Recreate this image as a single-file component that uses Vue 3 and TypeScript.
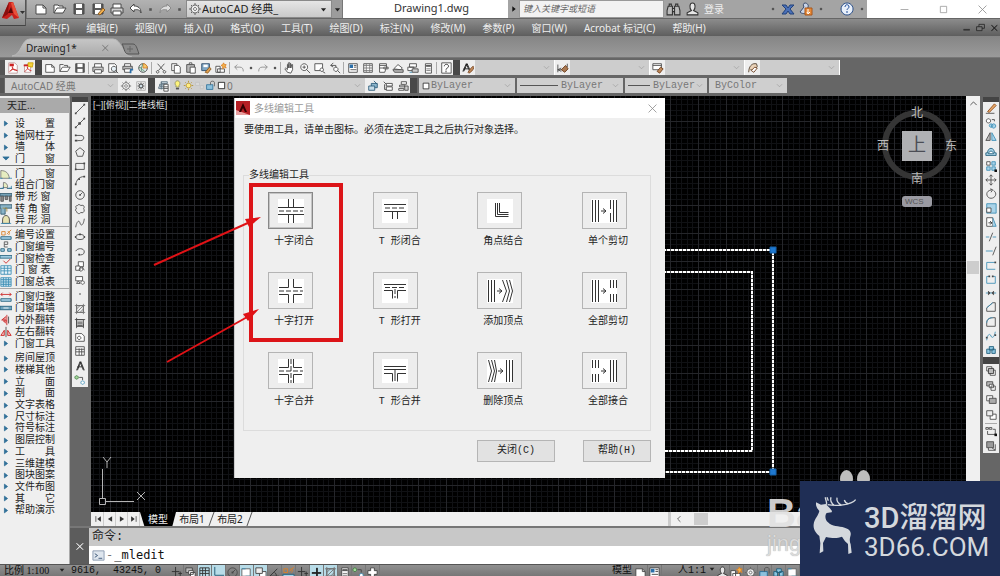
<script setup lang="ts">
import { h, ref } from 'vue'
import type { FunctionalComponent } from 'vue'

type Shape = [d: string, stroke?: string, fill?: string]

const K = '#484848'
const B = '#3d8fb5'
const L = '#a9d3e8'
const W = '#ffffff'
const O = '#d9822b'
const R = '#cc2222'
const N = 'none'

const saveShapes: Shape[] = [['M2 2h10v10H2z', K, '#5a5a5a'], ['M4 2h6v4H4z', N, W], ['M4 8h6v4H4z', N, W]]

const shapes: Record<string, Shape[]> = {
  new: [['M2 3h7l3 3v6H2z', K, W], ['M9 3v3h3']],
  open: [['M1 11V3h4l1 1h4v2', K, W], ['M1 11l3-5h9l-3 5z', K, W]],
  save: saveShapes,
  saveas: [...saveShapes, ['M7 12l5-6 2 2-5 5z', '#8a5a20', '#f0b050']],
  print: [['M3 6V2h8v4', K, W], ['M1 6h12v5H1z', K, '#cfcfcf'], ['M3 9h8v4H3z', K, W]],
  undo: [['M5 2L1 6l4 4V8c4-1 6 0 7 3c0-5-3-7-7-7z', K, W]],
  redo: [['M9 2l4 4-4 4V8C5 7 3 8 2 11c0-5 3-7 7-7z', '#8a8a8a', '#dddddd']],
  undoLight: [['M5 3L2 6l3 3M2 6h6c3 0 4 2 4 5', '#8a8a8a']],
  redoLight: [['M9 3l3 3-3 3M12 6H6c-3 0-4 2-4 5', '#8a8a8a']],
  dot: [['M5 5h4v4H5z', N, '#555555']],
  down: [['M3 5h8l-4 5z', N, '#222222']],
  right: [['M4 2l6 5-6 5z', N, '#111111']],
  chevron: [['M3 5l4 4 4-4', '#999999']],
  up: [['M3 9l4-4 4 4', '#333333']],
  gear: [['M7 1v2M7 11v2M1 7h2M11 7h2M3 3l1 1M10 10l1 1M11 3l-1 1M3 11l1-1', '#666666'], ['M7 3a4 4 0 1 0 .1 0z', '#666666', '#eeeeee'], ['M7 5.500a1.500 1.500 0 1 0 .1 0z', '#666666', W]],
  gearBox: [['M2 2h10v10H2z', '#aaaaaa'], ['M4 4l6 6M10 4l-6 6M7 3v8M3 7h8', K], ['M5 5h4v4H5z', K, '#cfdde5']],
  pdf: [['M2 1h7l3 3v9H2z', '#bb9999', W], ['M3 2h5v3H3z', N, R], ['M3 11c4-2 4-5 3-6M6 6c1 3 3 4 6 4M4 10c3-2 5-2 8 0', R]],
  pdfGo: [['M3 3h7v9H3z', '#bb9999', W], ['M3 11c4-2 4-5 3-6M6 6c1 3 3 4 5 4', R], ['M7 1l6 0-1 5-5-1z', '#c8a000', '#f3d23c'], ['M2 3h5v2H2z', N, R]],
  preview: [['M2 2h7l2 2v8H2z', K, W], ['M8 5a3 3 0 1 0 .1 0z', K, '#e8f2f8'], ['M10 10l3 3', K]],
  publish: [['M3 5V2h7v3', K, W], ['M1 5h11v4H1z', K, '#bbbbbb'], ['M3 8h7v4H3z', K, W], ['M10 8h3v2h-2v3h-2v-3z', N, '#2a6ea8']],
  globe: [['M7 2a5 5 0 1 0 .1 0z', K, '#dfe8ec'], ['M7 2v5h5c0-3-2-5-5-5z', O, '#f3c96a'], ['M2 7c3-2 5 3 7 4M6 2c2 2-3 4 0 9', '#4c8a5c']],
  cut: [['M3 2l7 8M11 2l-7 8', K], ['M3 10a1.500 1.500 0 1 0 .1 0zM11 10a1.500 1.500 0 1 0 .1 0z', K]],
  copy: [['M2 2h6v8H2z', K, W], ['M5 4h5l2 2v7H5z', K, W]],
  paste: [['M2 3h9v9H2z', K, '#b8b8b8'], ['M5 1h3v2H5z', K, W], ['M6 6h6v7H6z', K, W]],
  match: [['M2 2h9v8H2z', '#2f4b6b', '#7ea6c4'], ['M4 3h5v3H4z', N, W], ['M6 12l5-6 2 2-4 5z', '#8a5a20', '#e0a050']],
  star: [['M1 5h5v7H1zM3 8h8v4H3z', K, W], ['M10 1l1 2 2 0-1 2 1 2-2-1-2 2 0-3-2-1 2-1z', O, '#f3b34a']],
  hand: [['M4 12L1 8l1-1 2 2V3h1v4V1h2v6V2h1v5l1-4h1v6l-2 4z', K, W]],
  zoom: [['M6 2a4 4 0 1 0 .1 0z', K, W], ['M9 9l4 4M4 6h4M6 4v4', K]],
  zoomWin: [['M1 2h9v8H1z', K, W], ['M9 7a2 2 0 1 0 .1 0zM10 11l3 2', K, W]],
  zoomPrev: [['M5 1L2 4l3 2M2 4h6v2', K], ['M8 6a2.500 2.500 0 1 0 .1 0zM10 10l3 3', K, W]],
  props: [['M2 2h10v10H2z', K, W], ['M3 3h4v4H3z', N, '#2a6ea8'], ['M8 4h3M8 6h3M4 9h7', K]],
  center: [['M2 2h10v10H2z', K, W], ['M2 4h10M2 7h10M2 10h10M5 2v10M9 2v10', '#777777']],
  palette: [['M3 2h8v4l-2 6H3z', K, W], ['M3 4h8M3 7h5M8 6h5v2H8z', K]],
  sheet: [['M2 8l5-5 5 4-2 2z', K, W], ['M1 9h12v3H3z', K, '#bbbbbb']],
  markup: [['M3 2h8v4H3zM1 6h7v4H1z', K, W], ['M6 8h7v4H6z', K, '#cccccc'], ['M3 12h3', B]],
  calc: [['M4 2h7v11H4z', K, W], ['M5 4h5v1H5z', K, '#888888'], ['M5 8h5M5 10h5', '#777777']],
  help: [['M2 1h11v12H2z', K, W], ['M5 5c0-3 5-3 5 0c0 2-3 2-3 4M7 10v2', '#222222']],
  textStyle: [['M1 11L5 2l4 9M2 8h5', '#111111'], ['M2 11L6 2l4 9', '#111111'], ['M7 12c2-3 4-6 6-7l1 1c-1 4-4 6-6 7z', '#7b4b2a', '#c08a5a']],
  dimStyle: [['M1 3v9M1 9l4-2M1 9l4 2M1 9h10M12 2v4', K], ['M5 9l5-5 3 4-4 4z', '#6b3b1a', '#a87850']],
  tableStyle: [['M1 2h10v7H1zM1 4h10', K, W], ['M6 11l4-5 3 2-4 5z', '#6b3b1a', '#c08a5a']],
  leaderStyle: [['M2 12c0-5 2-9 6-10h3l1 3-4 5-4-1', '#4b3b2a', '#ead2b8'], ['M5 10l4-4 3 1-4 5z', '#6b3b1a', W]],
  layers: [['M5 2h7v2H5zM3 5h6v2H3zM2 8h6v2H2zM5 11V2', '#5a7080', '#d6e2ea'], ['M8 5h5v8H8zM8 8h5M8 10h5', K, W]],
  bulb: [['M7 1c-3 0-4 4-2 6v2h4V7c2-2 1-6-2-6z', '#8a8a60', '#fdf37a'], ['M5 10h4v2H5z', N, '#555555']],
  sun: [['M7 4a3 3 0 1 0 .1 0z', '#b08a20', '#ffec80'], ['M7 1v2M7 11v2M1 7h2M11 7h2M3 3l1 1M10 10l1 1M11 3l-1 1M3 11l1-1', '#b08a20']],
  freeze: [['M2 3h5v4H2zM8 7h4v4H8z', '#c2c2c2', '#d8d8d8']],
  lock: [['M2 6h8v6H2z', '#2a6e98', '#8cc0dc'], ['M7 6V3c0-2 5-2 5 0v5', '#555555']],
  square: [['M3 3h8v8H3z', '#111111', W]],
  layer1: [['M5 4h7v5H5z', '#2a5a78', '#8cb6cc'], ['M2 7h7v5H2zM8 1l4 4', '#2a5a78', '#c6dce8']],
  layer2: [['M2 2l3 3M5 4h7v3H5zM5 8h7v4H5z', K, W], ['M3 5v6h2', K]],
  layer3: [['M5 2h6v3H5zM3 6h6v2H3zM2 10h6v2H2z', K, W], ['M9 7h4v5H9z', K, '#cccccc']],
  binoculars: [['M2 4h4v8H1V8zM8 4h4l1 4v4H8zM6 6h2v3H6zM3 2h2v2H3zM9 2h2v2H9z', '#333333', '#bbbbbb']],
  user: [['M7 1c-3 0-3 5-1 7l-4 2v2h10v-2l-4-2c2-2 2-7-1-7z', '#333333', '#e6e6e6']],
  exchange: [['M1 3h4l2 3 2-3h4l-4 4 4 5H9L7 9l-2 3H1l4-5z', '#23427a', '#4a70b8']],
  community: [['M6 1c-2 0-2 3-1 4l-4 5c2 2 5 2 7 0l1-5C10 3 8 1 6 1z', '#3a4a6a', '#c8d4e8'], ['M6 6h7v7H6z', '#a8561a', '#e88a38'], ['M9 7v4M8 10l1 2 2-2', W]],
  helpBlue: [['M7 1a6 6 0 1 0 .1 0z', '#2a4f8a', '#e9f0fa'], ['M5 5c0-3 4-3 4 0c0 1-2 2-2 3M7 9v2', '#1c4a98']],
  min: [['M2 7h10', '#999999']],
  max: [['M3 3h8v8H3z', '#999999']],
  close: [['M2 2l10 10M12 2L2 12', '#8a8a8a']],
  tabClose: [['M2 2l10 10M12 2L2 12', '#777777'], ['M3 2l10 10M13 2L3 12', '#777777']],
  minDark: [['M2 10h9', '#222222'], ['M2 9h9', '#222222']],
  restore: [['M5 3h7v5H5z', '#222222'], ['M2 6h7v5H2z', '#222222', '#777777']],
  closeDark: [['M3 3l8 8M11 3l-8 8', '#222222'], ['M4 3l8 8M12 3l-8 8', '#222222']],
  closeWhite: [['M2 2l10 10M12 2L2 12', '#ffffff'], ['M3 2l10 10M13 2L3 12', '#ffffff']],
  // drawing tools
  line: [['M2 12L12 2', K], ['M1 11h2v2H1zM11 1h2v2h-2z', N, K]],
  xline: [['M2 12L12 2', K], ['M1 11h2v2H1zM11 1h2v2h-2zM5 6h3v3H5z', N, K]],
  pline: [['M2 4h6c5 0 4 6 0 6H4', K], ['M1 9h3v2H1zM1 3h2v2H1z', N, K]],
  polygon: [['M7 2l5 4-2 6H4L2 6z', K]],
  rect: [['M2 4h10v7H2z', K], ['M1 10h2v2H1zM11 3h2v2h-2z', N, K]],
  arc: [['M2 12c1-5 4-9 10-9', K], ['M1 11h2v2H1zM11 2h2v2h-2zM5 5h2v2H5z', N, K]],
  circle: [['M7 2a5 5 0 1 0 .1 0zM7 7l3-3', K], ['M6 6h2v2H6z', N, K]],
  cloud: [['M4 3c1-2 3-1 4 0c2-1 4 0 4 2c-1 1-1 2 0 3c0 3-2 4-4 3c-1 2-4 2-5-1c-2-1-1-3 0-4C1 5 2 3 4 3z', K]],
  spline: [['M2 12c1-7 4-9 5-5s4 3 5-5', K]],
  ellipse: [['M7 4c-7 0-7 6 0 6s7-6 0-6z', K], ['M1 6h2v2H1zM6 3h2v2H6zM11 6h2v2h-2z', N, K]],
  earc: [['M2 6c2-4 10-4 10 1c0 3-4 4-6 3', K], ['M5 9h2v2H5z', N, K]],
  insert: [['M5 2h6v6H5z', K, W], ['M2 7h5v5H2zM9 7l3 5M8 9a2 2 0 1 0 .1 0z', K, W]],
  block: [['M2 3h8v5H2z', K, W], ['M5 8l-2 3h4zM10 8a2 2 0 1 0 .1 0z', K, W]],
  point: [['M6 6h2v2H6z', N, '#777777']],
  hatch: [['M3 3h8v8H3z', K], ['M1 3h12M1 11h12M3 1v12M11 1v12M3 7l4-4M3 11l8-8M7 11l4-4', '#777777']],
  gradient: [['M3 3h8v8H3zM1 3h12M3 1v12', K, '#dddddd'], ['M4 6h6M4 8h6M4 10h6M11 8v5', K]],
  region: [['M2 3h7l3 3v6H2z', K, W], ['M6 6a2 2 0 1 0 .1 0z', K]],
  table: [['M2 2h10v10H2zM2 5h10M2 8h10M6 4v8M9 4v8', K, W]],
  text: [['M3 12L7 2l4 10M4 8h6', '#222222'], ['M4 12L8 2l4 10', '#222222']],
  addsel: [['M3 2a2 2 0 1 0 .1 0z', '#3d7a3d', '#a8d8a0'], ['M10 8a2 2 0 1 0 .1 0z', B, W], ['M6 4h4v3', K]],
  // modify tools
  erase: [['M3 10l8-9 2 2-8 8z', '#8a4a1a', '#e8a868'], ['M1 12h10', K]],
  copyObj: [['M4 2a2.500 2.500 0 1 0 .1 0z', K, W], ['M10 8a2.500 2.500 0 1 0 .1 0zM7 8a2 2 0 1 0 .1 0z', B, L], ['M8 3h3v2', K]],
  mirror: [['M6 2v9H1z', K, '#bbbbbb'], ['M8 2v9h5z', B, L]],
  offset: [['M1 11h12V8h-2c0-7-8-7-8 0H1z', '#22607c', L], ['M4 9h6c-1-4-5-4-6 0z', '#22607c', W]],
  array: [['M2 2h4v4H2z', K, W], ['M8 2h4v4H8zM2 8h4v4H2zM8 8h4v4H8z', B, L], ['M11 11h3v3h-3z', N, '#111111']],
  move: [['M7 1v12M1 7h12M5 3l2-2 2 2M5 11l2 2 2-2M3 5L1 7l2 2M11 5l2 2-2 2', K]],
  rotate: [['M10 3c5 3 2 9-3 9S0 5 5 3l3-1M6 1l3 1-2 3', K]],
  scale: [['M2 2h11v11H2z', B, L], ['M2 7h5v5H2z', K, W]],
  stretch: [['M2 2h7v10H2z', K, W], ['M9 2l4 10H9', B, L], ['M4 8h4M6 6l2 2-2 2', '#222222']],
  trim: [['M1 7h4M9 7h4', B], ['M9 2L5 12', K]],
  extend: [['M1 7h8', B], ['M13 2L9 12', K]],
  breakPt: [['M12 4H2v8h10', B], ['M11 3h2v2h-2z', N, K]],
  brk: [['M5 4H2v8h10V4H9', B], ['M4 3h2v2H4zM8 3h2v2H8z', N, K]],
  join: [['M1 7h12', B], ['M4 5l2 2-2 2zM10 5L8 7l2 2z', K, K]],
  chamfer: [['M2 12h10V2H9L2 8z', K], ['M2 8l7-6', B]],
  fillet: [['M2 12h10V2H9C4 2 2 5 2 8z', K], ['M2 8c0-3 2-6 7-6', B]],
  blend: [['M2 12c1-8 4-8 5-5s4 2 5-5', B], ['M1 8h2v2H1zM11 5h2v2h-2z', N, K]],
  explode: [['M2 6h4v5H2zM5 3h5v4H5zM8 6h4v5H8z', '#22607c', '#8cc6e0']],
  ord1: [['M2 2h6v5H2z', K, W], ['M6 6h6v6H6z', K, W], ['M4 4h6v6H4z', '#333333', '#bbbbbb']],
  ord2: [['M2 2h7v5H2z', K, '#bbbbbb'], ['M5 5h5v4H5zM7 7h5v5H7z', K, W]],
  ord3: [['M2 2h7v6H2z', K, W], ['M5 5h8v6H5z', K, '#aaaaaa']],
  ord4: [['M6 6h7v6H6z', K, W], ['M2 2h7v6H2z', K, '#eeeeee']],
  ord5: [['M1 3h3v2H1zM5 3h3v2H5zM9 5h3v6H3V7', K], ['M11 10h3v3h-3z', N, '#111111']],
  ord6: [['M2 2h8v7H2z', K, '#9a9a9a'], ['M4 9v3h8V5M8 9l4 3', K]],
  // door and window commands
  tri: [['M5 4l4 3-4 3z', '#2f6f98', '#2f6f98']],
  triDown: [['M3 5h8l-4 4z', '#2f6f98', '#2f6f98']],
  dArc: [['M1 12V3c6 0 9 3 10 9z', '#777777', '#e6ecc0'], ['M0 12h3M10 12h4', B]],
  dCombo: [['M4 10V4c3 0 5 2 5 6z', '#777777', '#e6ecc0'], ['M0 11h4v-2M8 11h6V8', '#22607c', L]],
  dStrip: [['M0 3h14v3H0z', '#30586c', '#7aa7bc'], ['M1 6h3v6H1zM6 6h3v4H6zM11 6h2v6h-2z', '#555555', '#8a8a8a']],
  dCorner: [['M0 2h14v4H6v7H1V6H0z', '#30586c', '#8ab4c8'], ['M3 6h5v4', '#a08a40']],
  dArch: [['M3 11V7c0-7 8-7 8 0v4z', '#444444', '#e9e4b0'], ['M1 11h12', B]],
  dNum1: [['M2 3h4v4H2zM8 6l5-5M9 3c2 0 3 2 1 4', O], ['M1 9h12v3H1z', '#22607c', L]],
  dNum2: [['M5 1h4v3H5v3h4M5 1v3', '#555555'], ['M1 9h4v3H1zM9 9h4v3H9z', '#22607c', L]],
  dCheck: [['M0 3h14v3H0z', '#22607c', L], ['M4 9l3 3 5-5', R]],
  dTable: [['M1 2h12v10H1zM1 5h12M1 8h12M5 2v10M9 2v10', B, '#e6f3fa']],
  dTable2: [['M1 2h12v10H1zM1 4h12M1 6h12M1 8h12M1 10h12M4 2v10M7 2v10M10 2v10', B, '#e6f3fa']],
  dArrange: [['M1 4h12M3 2L1 4l2 2M11 2l2 2-2 2', R], ['M1 9h12v3H1z', '#22607c', L]],
  dFill: [['M0 5h14v4H0z', '#22607c', '#6fa3bd'], ['M4 7h6', W]],
  dFlipV: [['M8 1v12M7 3L2 7h5M7 11L4 8h4', R, '#e9a0a0'], ['M10 3v8', '#444444']],
  dFlipH: [['M5 5v6H1zM9 5v6h4z', R, '#f0c0c0'], ['M7 1v12', '#444444']],
  // status bar toggles
  sGrid: [['M2 2h10v10H2zM2 5h10M2 8h10M5 2v10M8 2v10', '#333333']],
  sOrtho: [['M3 1v9h10', '#1f5a74']],
  sPlus: [['M7 2v10M2 7h10', '#222222'], ['M8 2v10M2 8h10', '#222222']],
  sSnap: [['M6 1v10M2 6h8M9 8h4M11 6v5', '#333333']],
  sCross: [['M5 2h4v3h3v4H9v3H5V9H2V5h3z', '#444444', W]],
  sAngle: [['M2 11h10M2 11l8-8M7 7c2 1 2 3 2 4', '#333333']],
  sDraw: [['M2 3h9v8H2z', '#666666', W], ['M2 3h4M6 11h6', B]],
  prompt: [['M1 2h12v10H1z', '#8a9ab0', '#dfe6ee'], ['M3 5l3 2-3 2M7 10h4', '#3c5878']],
  first: [['M4 3v8', '#333333'], ['M11 3v8L6 7z', N, '#333333']],
  prev: [['M10 3v8L4 7z', N, '#333333']],
  next: [['M4 3v8l6-4z', N, '#333333']],
  last: [['M10 3v8', '#333333'], ['M3 3v8l5-4z', N, '#333333']],
  left: [['M9 3L5 7l4 4', '#333333']],
}

const Icon: FunctionalComponent<{ name: string; size?: number }> = (props) =>
  h(
    'svg',
    { viewBox: '0 0 14 14', width: props.size ?? 12, height: props.size ?? 12, 'aria-hidden': 'true' },
    (shapes[props.name] ?? []).map(([d, stroke, fill]) => h('path', { d, stroke: stroke ?? K, fill: fill ?? N })),
  )
Icon.props = ['name', 'size']

const quickTools = ['new', 'open', 'save', 'saveas', 'print', 'undo', 'dot', 'redo', 'dot']
const menus = ['文件(F)', '编辑(E)', '视图(V)', '插入(I)', '格式(O)', '工具(T)', '绘图(D)', '标注(N)', '修改(M)', '参数(P)', '窗口(W)', 'Acrobat 标记(C)', '帮助(H)']

const standardTools = ['new', 'open', 'save', '|', 'print', 'preview', 'publish', 'globe', '|', 'cut', 'copy', 'paste', 'match', 'star', '|', 'undoLight', 'dot', 'redoLight', 'dot', '|', 'hand', 'zoom', 'zoomWin', 'zoomPrev', '|', 'props', 'center', 'palette', 'sheet', 'markup', 'calc', '|', 'help']
const styleTools = ['textStyle', 'dimStyle', 'tableStyle', 'leaderStyle']
const layerFlags = ['bulb', 'sun', 'freeze', 'lock', 'square']
const drawTools = ['line', 'xline', 'pline', 'polygon', 'rect', 'arc', 'circle', 'cloud', 'spline', 'ellipse', 'earc', 'insert', 'block', 'point', 'hatch', 'gradient', 'region', 'table', 'text', 'addsel']
const modifyTools = ['erase', 'copyObj', 'mirror', 'offset', 'array', 'move', 'rotate', 'scale', 'stretch', 'trim', 'extend', 'breakPt', 'brk', 'join', 'chamfer', 'fillet', 'blend', 'explode']
const orderTools = ['ord1', 'ord2', 'ord3', 'ord4', '|', 'ord5', 'ord6']

const commands: { icon: string; text: string }[][] = [
  [
    { icon: 'tri', text: '设　　置' },
    { icon: 'tri', text: '轴网柱子' },
    { icon: 'tri', text: '墙　　体' },
    { icon: 'triDown', text: '门　　窗' },
  ],
  [
    { icon: 'dArc', text: '门　　窗' },
    { icon: 'dCombo', text: '组合门窗' },
    { icon: 'dStrip', text: '带 形 窗' },
    { icon: 'dCorner', text: '转 角 窗' },
    { icon: 'dArch', text: '异 形 洞' },
  ],
  [
    { icon: 'dNum1', text: '编号设置' },
    { icon: 'dNum2', text: '门窗编号' },
    { icon: 'dCheck', text: '门窗检查' },
    { icon: 'dTable', text: '门 窗 表' },
    { icon: 'dTable2', text: '门窗总表' },
  ],
  [
    { icon: 'dArrange', text: '门窗归整' },
    { icon: 'dFill', text: '门窗填墙' },
    { icon: 'dFlipV', text: '内外翻转' },
    { icon: 'dFlipH', text: '左右翻转' },
    { icon: 'tri', text: '门窗工具' },
  ],
  ['房间屋顶', '楼梯其他', '立　　面', '剖　　面', '文字表格', '尺寸标注', '符号标注', '图层控制', '工　　具', '三维建模', '图块图案', '文件布图', '其　　它', '帮助演示'].map((text) => ({ icon: 'tri', text })),
]

const three = 'M1.500 1v22M4.500 1v22M7.500 1v22'
const threeRight = 'M19.500 1v22M22.500 1v22M25.500 1v22'
const arrow = 'M10 12h5M12 9.500l3 2.500-3 2.500'
const mlineTools = [
  { text: '十字闭合', d: 'M10.500 0v8M15.500 0v8M10.500 16v8M15.500 16v8M0 8.500h26M0 15.500h26', dash: 'M1 12h24' },
  { text: 'T 形闭合', d: 'M2 5.500h22M2 12.500h22M10.500 12v8M15.500 12v8', dash: 'M3 9h20' },
  { text: '角点结合', d: 'M8.500 4v13.500h13M10.500 4v11.500h11M12.500 4v9.500h9', dash: '' },
  { text: '单个剪切', d: `${three}M19.500 1v9M19.500 14v9M22.500 1v22M25.500 1v22${arrow}`, dash: '' },
  { text: '十字打开', d: 'M10.500 0v8.500H1M15.500 0v8.500H24M10.500 24v-8.500H1M15.500 24v-8.500H24', dash: 'M1 12h24' },
  { text: 'T 形打开', d: 'M2 5.500h22M2 11.500h8.500v8M24 11.500h-8.500v8', dash: 'M3 8.500h20M13 10v9' },
  { text: '添加顶点', d: `${three}M15.500 1l4 11-4 11M19.500 1l3 11-3 11M22.500 1l3 11-3 11${arrow}`, dash: '' },
  { text: '全部剪切', d: `${three}M19.500 1v8M22.500 1v8M25.500 1v8M19.500 15v8M22.500 15v8M25.500 15v8${arrow}`, dash: '' },
  { text: '十字合并', d: 'M10.500 0v8.500H1M15.500 0v8.500H24M10.500 24v-8.500H1M15.500 24v-8.500H24', dash: 'M1 12h24M13 0v24' },
  { text: 'T 形合并', d: 'M2 7.500h22M2 14.500h8.500v8M24 14.500h-8.500v8M2 10.500h22M13 10v12', dash: '' },
  { text: '删除顶点', d: `M1.500 1l3 11-3 11M4.500 1l3 11-3 11M7.500 1l2 11-2 11${threeRight}M11 12h5M13 9.500l3 2.500-3 2.500`, dash: '' },
  { text: '全部接合', d: `M1.500 1v8M4.500 1v8M7.500 1v8M1.500 15v8M4.500 15v8M7.500 15v8${threeRight}${arrow}`, dash: '' },
]

const statusTools: { icon: string; on?: boolean }[] = [
  { icon: 'sSnap' }, { icon: 'ord2' }, { icon: 'sGrid', on: true }, { icon: 'sOrtho', on: true }, { icon: 'circle' },
  { icon: 'sDraw', on: true }, { icon: 'ord4', on: true }, { icon: 'sAngle' }, { icon: 'dNum1' }, { icon: 'sSnap' },
  { icon: 'sPlus', on: true }, { icon: 'hatch', on: true }, { icon: 'calc' }, { icon: 'addsel' }, { icon: 'sCross' },
]
const command = ref('_mledit')
const search = ref('')
</script>

<template>
  <div class="app">
    <header class="head">
      <button class="logo" aria-label="应用程序菜单">
        <svg viewBox="0 0 26 26" width="26" height="26">
          <path d="M2 18L9 2h4l6 16-5 1-2-4-5 4z" fill="#c8201c" />
          <path d="M9 2l-1 12-6 4z" fill="#8a0f0f" /><path d="M11 3l3 11 5 4-6-16z" fill="#e8503a" />
          <path d="M8 13l3-6 2 6z" fill="#5a0808" /><path d="M20 11h5l-2.500 3z" fill="#333" />
        </svg>
      </button>
      <div class="titlebar">
        <div class="quick">
          <button v-for="(t, i) in quickTools" :key="i" :class="{ narrow: t === 'dot' }" :aria-label="t"><Icon :name="t" :size="t === 'dot' ? 9 : 14" /></button>
        </div>
        <div class="workspace">
          <Icon name="gear" :size="14" />
          <select aria-label="工作空间"><option>AutoCAD 经典_</option></select>
          <Icon name="down" :size="9" />
        </div>
        <button class="more" aria-label="自定义"><Icon name="down" :size="9" /></button>
        <div class="doc">Drawing1.dwg</div>
        <button class="arrow" aria-label="展开"><Icon name="right" :size="8" /></button>
        <input v-model="search" class="search" type="text" placeholder="键入关键字或短语" aria-label="搜索" />
        <div class="account">
          <button aria-label="查找"><Icon name="binoculars" :size="15" /></button>
          <button class="login"><Icon name="user" :size="15" />登录</button>
          <span class="space"></span>
          <Icon name="dot" :size="8" />
          <button aria-label="Exchange"><Icon name="exchange" :size="14" /></button>
          <button aria-label="社区"><Icon name="community" :size="14" /></button>
          <Icon name="dot" :size="8" />
          <button class="qmark" aria-label="帮助"><Icon name="helpBlue" :size="14" /></button>
          <Icon name="dot" :size="8" />
        </div>
        <div class="winbtns">
          <button aria-label="最小化"><Icon name="min" :size="11" /></button>
          <button aria-label="最大化"><Icon name="max" :size="11" /></button>
          <button aria-label="关闭"><Icon name="close" :size="11" /></button>
        </div>
      </div>
      <nav class="menus">
        <button v-for="m in menus" :key="m">{{ m }}</button>
        <span class="space"></span>
        <Icon name="minDark" :size="10" /><Icon name="restore" :size="11" /><Icon name="closeDark" :size="10" />
      </nav>
    </header>

    <div class="tabs">
      <svg class="tabshape" viewBox="0 0 128 19" width="128" height="19">
        <defs><linearGradient id="tabFill" x2="0" y2="1"><stop offset="0" stop-color="#c6c6c6" /><stop offset="1" stop-color="#a9a9a9" /></linearGradient></defs>
        <path d="M0 18C10 17 9 1 18 1h83c9 0 9 17 19 18z" fill="url(#tabFill)" stroke="#b9b9b9" />
      </svg>
      <button class="tab">Drawing1*<Icon name="tabClose" :size="8" /></button>
      <button class="addtab" aria-label="新建">
        <svg viewBox="0 0 20 12" width="20" height="12"><path d="M1 1h11c3 0 4 4 6 10H7C3 11 3 3 1 1z" fill="#8a8a8a" stroke="#555" /><path d="M9 3v6M6 6h6" stroke="#666" /></svg>
      </button>
    </div>

    <div class="bars">
      <div class="bar">
        <span class="edge"></span>
        <div class="group"><button aria-label="PDF"><Icon name="pdf" /></button><button aria-label="PDF 选项"><Icon name="pdfGo" /></button></div>
        <span class="grip"></span>
        <div class="group">
          <template v-for="(t, i) in standardTools" :key="i">
            <i v-if="t === '|'"></i>
            <button v-else :class="{ narrow: t === 'dot' }" :aria-label="t"><Icon :name="t" :size="t === 'dot' ? 8 : 12" /></button>
          </template>
        </div>
        <span class="grip"></span>
        <div v-for="s in styleTools" :key="s" class="group style">
          <button :aria-label="s"><Icon :name="s" /></button>
          <select :aria-label="s" disabled><option></option></select>
          <Icon name="chevron" :size="9" />
        </div>
      </div>
      <div class="bar">
        <span class="edge thin"></span>
        <div class="combo space-combo"><select aria-label="工作空间" disabled><option>AutoCAD 经典</option></select><Icon name="chevron" :size="9" /></div>
        <div class="group"><button aria-label="设置"><Icon name="gear" /></button><button aria-label="我的工作空间"><Icon name="gearBox" /></button></div>
        <span class="grip"></span>
        <div class="group"><button aria-label="图层特性"><Icon name="layers" /></button></div>
        <div class="combo layer-combo">
          <Icon v-for="f in layerFlags" :key="f" :name="f" :size="11" />
          <select aria-label="图层" disabled><option>0</option></select><Icon name="chevron" :size="9" />
        </div>
        <div class="group"><button aria-label="置为当前"><Icon name="layer1" /></button><button aria-label="上一个图层"><Icon name="layer2" /></button><button aria-label="图层状态"><Icon name="layer3" /></button></div>
        <span class="grip"></span>
        <div class="combo mono color-combo"><Icon name="square" :size="10" /><select aria-label="颜色" disabled><option>ByLayer</option></select><Icon name="chevron" :size="9" /></div>
        <div class="combo mono type-combo"><span class="stroke"></span><select aria-label="线型" disabled><option>ByLayer</option></select><Icon name="chevron" :size="9" /></div>
        <div class="combo mono weight-combo"><span class="stroke"></span><select aria-label="线宽" disabled><option>ByLayer</option></select><Icon name="chevron" :size="9" /></div>
        <div class="combo mono plot-combo"><select aria-label="打印样式" disabled><option>ByColor</option></select><Icon name="chevron" :size="9" /></div>
      </div>
    </div>

    <main class="work">
      <aside class="panel">
        <h2>天正...</h2>
        <div class="cmds">
          <template v-for="(g, gi) in commands" :key="gi">
            <hr v-if="gi" :class="{ strong: gi === 1, blank: gi === 4 }" />
            <button v-for="(c, ci) in g" :key="ci"><Icon :name="c.icon" :size="c.icon.startsWith('tri') ? 11 : 12" />{{ c.text }}</button>
          </template>
        </div>
      </aside>

      <div class="center">
        <div class="upper">
          <div class="vtools">
            <div class="vbar draw"><button v-for="t in drawTools" :key="t" :aria-label="t"><Icon :name="t" /></button></div>
          </div>
          <div class="view">
            <div class="canvas">
              <svg class="scene" width="100%" height="100%">
                <defs>
                  <pattern id="grid" x="19" y="25" width="28" height="28" patternUnits="userSpaceOnUse">
                    <path d="M6.500 0v28M11.500 0v28M17.500 0v28M22.500 0v28M0 6.500h28M0 11.500h28M0 17.500h28M0 22.500h28" stroke="#101114" />
                    <path d="M.5 0v28M0 .5h28" stroke="#25262a" />
                  </pattern>
                </defs>
                <rect width="100%" height="100%" fill="url(#grid)" />
                <g fill="none" stroke-width="2">
                  <path d="M300 154H682V376H300M300 176H661V355H300" stroke="#555" />
                  <path d="M300 154H682V376H300M300 176H661V355H300" stroke="#fff" stroke-dasharray="3 1" />
                </g>
                <path d="M679 151h6v6h-6zM679 373h6v6h-6z" fill="#1f78d0" stroke="#1560a8" />
                <g fill="none" stroke="#b4b4b4"><path d="M11.500 373v29M14 405.500h29M8.500 402.500h6v6h-6zM12 361l4 5 4-5M16 366v6M46 396l8 8M54 396l-8 8" /></g>
              </svg>
              <p class="viewlabel">[−][俯视][二维线框]</p>
              <div class="compass">
                <span>北</span>
                <div><span>西</span><b>上</b><span>东</span></div>
                <span>南</span>
                <em>WCS</em>
              </div>

              <section class="dialog" role="dialog" aria-label="多线编辑工具">
                <div class="dtitle">
                  <svg viewBox="0 0 14 14" width="14" height="14"><path d="M0 0h14v14H0z" fill="#b51f24" /><path d="M0 9l14 5H0z" fill="#e8a0a0" /><path d="M3 11L7 2l4 9H9L7 7l-2 4z" fill="#300" /></svg>
                  <span>多线编辑工具</span>
                  <button aria-label="关闭对话框"><Icon name="close" :size="11" /></button>
                </div>
                <p>要使用工具，请单击图标。必须在选定工具之后执行对象选择。</p>
                <fieldset>
                  <legend>多线编辑工具</legend>
                  <div class="tools">
                    <div v-for="(t, i) in mlineTools" :key="t.text" class="tool">
                      <button :id="`tool-${i}`" :aria-label="t.text" :class="{ focus: i === 0 }">
                        <svg viewBox="0 0 26 24" width="26" height="24"><path :d="t.d" /><path v-if="t.dash" :d="t.dash" stroke-dasharray="5 2" /></svg>
                      </button>
                      <label :for="`tool-${i}`">{{ t.text }}</label>
                    </div>
                  </div>
                </fieldset>
                <div class="actions"><button class="wide">关闭(C)</button><button>帮助(H)</button></div>
              </section>

              <svg class="notes" viewBox="0 0 200 200" width="200" height="200">
                <path d="M99 29h90v155H99z" fill="none" stroke="#dc1418" stroke-width="4" />
                <g stroke="#e01216" stroke-width="2"><path d="M2 109L98 66" /><path d="M15 206L97 160" /></g>
                <path d="M109 61l-16 2 4 8zM107 153l-16 5 5 7z" fill="#e01216" />
              </svg>
            </div>
            <div class="layouts">
              <button v-for="n in ['first', 'prev', 'next', 'last']" :key="n" class="nav" :aria-label="n"><Icon :name="n" :size="10" /></button>
              <button class="model">模型</button>
              <button class="layout">布局1</button>
              <button class="layout">布局2</button>
              <span class="space"></span>
              <div class="hscroll"><Icon name="left" :size="10" /><span></span></div>
            </div>
          </div>
          <div class="vscroll"><Icon name="up" :size="11" /><span></span></div>
        </div>
        <div class="cmdline">
          <div class="cmdgrip"><Icon name="closeWhite" :size="9" /></div>
          <div class="cmdbody">
            <div class="history">命令:</div>
            <label class="entry"><Icon name="prompt" :size="13" /><span>-</span><input v-model="command" type="text" aria-label="命令" /></label>
          </div>
        </div>
      </div>

      <div class="vtools rightbar">
        <div class="vbar modify"><button v-for="t in modifyTools" :key="t" :aria-label="t"><Icon :name="t" /></button></div>
        <div class="vbar order">
          <template v-for="t in orderTools" :key="t"><i v-if="t === '|'"></i><button v-else :aria-label="t"><Icon :name="t" /></button></template>
        </div>
      </div>
    </main>

    <footer class="status">
      <span class="scale">比例 1:100</span><Icon name="down" :size="8" />
      <span class="coords">9616,&nbsp; 43245, 0</span>
      <div class="toggles"><button v-for="(s, i) in statusTools" :key="i" :class="{ on: s.on }" :aria-label="s.icon"><Icon :name="s.icon" :size="13" /></button></div>
      <span class="space"></span>
      <div class="toggles right">
        <span>模型</span>
        <button aria-label="布局"><Icon name="new" :size="13" /></button><button aria-label="快速查看"><Icon name="props" :size="13" /></button>
        <span class="ratio">人1:1</span><Icon name="down" :size="8" />
        <button v-for="n in ['user', 'star', 'gear', 'lock', 'explode', 'sDraw']" :key="n" :aria-label="n"><Icon :name="n" :size="13" /></button>
      </div>
    </footer>

    <div class="paws"><span></span><span></span></div>
    <div class="under"><strong>Ba</strong><span>jing</span></div>
    <div class="brand">
      <svg viewBox="180 355 141 180" width="47" height="60">
        <path d="M195 377l15 7 14-2 12 12 7 9-1 4-15 2c-6 7-5 20 4 28 12 13 32 11 50 16 12 3 20 10 18 22-3 12-4 18 0 28l3 25-10 4-1-30-9-8-9-14c-14 5-28 5-48 1l-9 18 1 25-11 6 2-30-3-22c-10-8-19-20-17-35 2-17 15-27 17-40-4-5-8-9-10-18z" fill="#d4d8dd" />
        <path d="M226 384c3-9-3-14-3-22M230 384c24 5 70 2 84-15M250 387c-10-8-14-14-10-25M232 372l-4-10M272 386c-12-6-16-12-14-23M292 382c-8-2-10-6-12-12" fill="none" stroke="#d4d8dd" stroke-width="4" />
      </svg>
      <div><strong>3D溜溜网</strong><span>3D66.COM</span></div>
    </div>
  </div>
</template>

<style>
html, body { margin: 0; }
body { overflow: hidden; }
</style>

<style scoped>
.app { position: relative; display: flex; flex-direction: column; height: 100vh; overflow: hidden; background: #666; color: #222; font: 10px/12px "Noto Sans", "Noto Sans CJK SC", sans-serif; }
.app * { box-sizing: border-box; }
button, input, select { font: inherit; color: inherit; }
button { display: inline-flex; align-items: center; justify-content: center; flex: none; margin: 0; padding: 0; border: 0; background: none; white-space: nowrap; }
select { flex: 1; min-width: 0; padding: 0; border: 0; background: none; appearance: none; opacity: 1; outline: 0; }
svg { flex: none; display: block; }
.space { flex: 1; }

.head { display: grid; grid-template-columns: 26px minmax(0, 1fr); grid-template-rows: 19px 17px; background: linear-gradient(#a4a4a4 0 19px, #8c8c8c 19px, #5e5e5e 36px); }
.logo { grid-row: 1 / 3; width: 26px; height: 26px; background: linear-gradient(#b8b8b8, #888); border-right: 1px solid #555; border-bottom: 1px solid #444; }
.titlebar { display: flex; align-items: stretch; min-width: 0; border-bottom: 1px solid #666; }
.quick { display: flex; align-items: center; width: 160px; padding-left: 4px; background: linear-gradient(#b2b2b2, #9c9c9c); border-left: 1px solid #777; }
.quick button { width: 19px; }
.quick .narrow { width: 10px; }
.workspace { display: flex; align-items: center; width: 146px; padding: 0 3px 0 1px; background: linear-gradient(#e6e6e6, #cacaca); border: 1px solid #8a8a8a; font-size: 11px; }
.more { width: 11px; background: #9c9c9c; border-right: 1px solid #777; }
.doc { flex: 1; padding-left: 12px; background: #fff; text-align: center; font-size: 11px; line-height: 16px; color: #333; }
.arrow { width: 11px; }
.search { width: 145px; padding: 0 3px; border: 1px solid #999; background: #f2f2f2; font-size: 9px; font-style: italic; }
.search::placeholder { color: #666; opacity: 1; }
.account { display: flex; align-items: center; width: 203px; gap: 4px; padding: 0 1px 0 2px; color: #eee; }
.login { gap: 4px; }
.qmark { margin-left: 11px; }
.winbtns { display: flex; align-items: center; justify-content: space-around; width: 133px; padding-left: 20px; background: #fff; gap: 4px; }
.winbtns button { width: 20px; }
.menus { display: flex; align-items: center; gap: 17px; padding: 0 1px 0 12px; color: #eee; }
.menus svg { margin-left: -14px; }

.tabs { display: grid; grid-template-columns: 128px auto 1fr; align-items: end; height: 22px; padding-left: 12px; background: linear-gradient(#858585, #9a9a9a); border-bottom: 1px solid #777; }
.tabshape, .tab { grid-row: 1; grid-column: 1; }
.tab { justify-content: flex-start; gap: 24px; height: 19px; padding-left: 14px; }
.addtab { margin-left: -19px; height: 17px; }

.bars { display: flex; flex-direction: column; gap: 3px; height: 38px; padding-top: 2px; background: #666; }
.bar { display: flex; height: 15px; align-items: stretch; }
.edge { width: 5px; background: #555; }
.edge.thin { width: 4px; margin-right: 1px; }
.grip { width: 7px; background: #484848; }
.group { display: flex; align-items: center; background: #eee; }
.group button { width: 15px; height: 15px; }
.group .narrow { width: 9px; }
.group i { width: 1px; height: 12px; margin: 0 1px; background: #aaa; }
.style { width: 95px; padding-right: 3px; background: #cdcdcd; border-right: 1px solid #fff; }
.style button { background: #eee; }
.combo { display: flex; align-items: center; padding-right: 3px; background: #cfcfcf; color: #777; }
.mono { font-family: "Liberation Mono", "Noto Sans CJK SC", monospace; margin-right: 2px; }
.space-combo { width: 113px; padding-left: 6px; }
.layer-combo { width: 195px; padding-left: 2px; }
.color-combo { width: 96px; padding-left: 2px; margin-left: 2px; }
.type-combo { width: 106px; padding-left: 3px; }
.weight-combo { width: 82px; padding-left: 3px; }
.plot-combo { width: 78px; padding-left: 6px; }
.stroke { width: 38px; height: 1px; margin-right: 3px; background: #555; }
.weight-combo .stroke { width: 22px; }

.work { display: flex; flex: 1; min-height: 0; }
.panel { display: flex; flex-direction: column; width: 70px; padding: 2px 0 48px; background: #efefef; border-right: 1px solid #aaa; font-family: "Liberation Sans", "Noto Sans CJK SC", sans-serif; }
.panel h2 { margin: 0 0 5px; padding-left: 7px; background: #aaa; font: inherit; line-height: 15px; }
.cmds { display: flex; flex: 1; flex-direction: column; min-height: 0; }
.cmds button { flex: 1 1 0; min-height: 0; justify-content: flex-start; line-height: 10px; gap: 3px; }
.cmds button svg { width: 12px; }
.cmds hr { width: 100%; height: 3px; margin: 0; border: solid #aaa; border-width: 1px 0 0; }
.cmds .strong { border-color: #777; }
.cmds .blank { border-color: transparent; }

.center { display: flex; flex: 1; flex-direction: column; min-width: 0; }
.upper { display: flex; flex: 1; min-height: 0; }
.vtools { width: 21px; padding: 1px 3px 0 2px; background: #666; }
.vbar { display: flex; flex-direction: column; justify-content: space-between; align-items: center; border-top: 5px solid #444; background: #eee; }
.vbar button { width: 14px; height: 14px; }
.vbar i { width: 12px; height: 1px; background: #aaa; }
.draw { height: 290px; }
.modify { height: 260px; }
.order { height: 96px; border-top-width: 7px; }
.rightbar { width: 20px; padding: 1px 1px 0 3px; }
.view { display: flex; flex: 1; flex-direction: column; min-width: 0; }
.canvas { position: relative; flex: 1; min-height: 0; background: #000; overflow: hidden; }
.scene { position: absolute; inset: 0; }
.viewlabel { position: absolute; left: 2px; top: 3px; margin: 0; color: #ddd; font-size: 9px; font-family: "Liberation Sans", "Noto Sans CJK SC", sans-serif; }
.compass { position: absolute; right: 9px; top: 9px; display: flex; flex-direction: column; align-items: center; width: 80px; color: #bbb; }
.compass::before { content: ""; position: absolute; box-sizing: border-box; top: 5px; left: 5px; width: 70px; height: 70px; border: 6px solid #353535; border-radius: 50%; }
.compass > * { position: relative; }
.compass span { font-size: 12px; line-height: 16px; }
.compass div { display: flex; align-items: center; justify-content: space-between; width: 80px; height: 50px; }
.compass b { width: 30px; height: 30px; background: #b0b1b4; color: #4b4d55; font: 18px/28px "Liberation Serif", "Noto Sans CJK SC", serif; text-align: center; }
.compass em { width: 30px; margin-top: 9px; border-radius: 3px; background: #9a9aa2; color: #555; font: 8px/11px "Liberation Sans", sans-serif; padding-left: 3px; }

.dialog { position: absolute; left: 143px; top: 2px; display: flex; flex-direction: column; width: 431px; padding-bottom: 16px; background: #efefef; border-left: 1px solid #ccc; }
.dialog button, .dialog p, .dialog legend, .dialog label { font-family: "Liberation Mono", "Noto Sans CJK SC", monospace; }
.dtitle { display: flex; align-items: center; gap: 4px; height: 20px; padding: 0 7px 0 1px; background: #fff; color: #999; }
.dtitle span { flex: 1; }
.dialog p { margin: 0; padding: 6px 9px 0; line-height: 13px; }
.dialog fieldset { margin: 32px 14px 0 8px; padding: 0; border: 1px solid #dcdcdc; }
.dialog legend { margin-left: 5px; padding: 0; line-height: 13px; }
.tools { display: grid; grid-template-columns: repeat(4, 45px); justify-content: space-between; row-gap: 24px; padding: 10px 23px 22px 24px; }
.tool button { width: 45px; height: 37px; border: 1px solid #b4b4b4; background: #ededed; }
.tool .focus { border-color: #888; box-shadow: inset 0 0 0 1px #c4c4c4; }
.tool svg { background: #fff; fill: none; stroke: #333; }
.tool label { display: block; margin: 7px 0 0 6px; line-height: 12px; white-space: nowrap; }
.actions { display: flex; justify-content: flex-end; gap: 28px; margin: 9px 14px 0 0; }
.actions button { width: 68px; height: 22px; border: 1px solid #b5b5b5; background: #e2e2e2; }
.actions .wide { width: 78px; }
.notes { position: absolute; left: 61px; top: 60px; overflow: visible; pointer-events: none; }

.layouts { display: flex; align-items: stretch; height: 14px; padding-left: 1px; background: #f0f0f0; }
.nav { width: 12px; border-right: 1px solid #ccc; }
.model { width: 36px; background: #000; color: #eee; clip-path: polygon(0 0, 100% 0, 90% 100%, 12% 100%); }
.layout { position: relative; width: 38px; padding-right: 6px; }
.layout::after { content: ""; position: absolute; right: 2px; top: 0; height: 14px; border-right: 1px solid #555; transform: skewX(-20deg); }
.hscroll { display: flex; align-items: center; gap: 10px; width: 298px; padding-left: 3px; border-left: 3px solid #ccc; }
.hscroll span { width: 14px; height: 12px; background: #cdcdcd; }
.vscroll { display: flex; flex-direction: column; align-items: center; gap: 152px; width: 14px; padding-top: 2px; background: #f0f0f0; }
.vscroll span { width: 12px; height: 13px; background: #cdcdcd; }

.cmdline { display: flex; border-top: 2px solid #777; }
.cmdgrip { display: flex; justify-content: center; width: 19px; padding-top: 14px; background: #5c5c5c; }
.cmdbody { flex: 1; background: #fff; }
.history { padding-left: 3px; background: #c8c8c8; line-height: 18px; font-size: 12px; font-family: "Liberation Mono", "Noto Sans CJK SC", monospace; }
.entry { display: flex; align-items: center; height: 18px; padding-left: 3px; font: 12px/18px "DejaVu Sans Mono", monospace; color: #111; }
.entry span { padding: 0 1px; color: #777; }
.entry input { flex: 1; min-width: 0; padding: 0; border: 0; outline: 0; background: none; }

.status { display: flex; flex: none; align-items: flex-start; height: 12px; padding-left: 4px; border-top: 1px solid #555; background: linear-gradient(#909090, #777); overflow: hidden; color: #111; line-height: 11px; font-family: "Liberation Mono", "Noto Sans CJK SC", monospace; }
.status > svg { margin-top: 1px; }
.scale { width: 54px; font-family: "Liberation Serif", "Noto Sans CJK SC", serif; }
.coords { width: 104px; padding-left: 5px; }
.toggles { display: flex; }
.toggles button { width: 14px; height: 15px; border-right: 1px solid #777; }
.toggles .on { background: #b8dce8; }
.right { margin-right: 200px; }
.right span { padding: 0 2px; }
.right .ratio { margin-left: 14px; }

.paws { position: absolute; right: 130px; bottom: 88px; display: flex; gap: 4px; }
.paws span { width: 13px; height: 18px; border-radius: 50%; background: #bdbdbd; }
.under { position: absolute; left: 767px; bottom: 20px; display: flex; flex-direction: column; color: rgba(225, 225, 225, .92); }
.under strong { font: bold 40px/36px "Liberation Sans", sans-serif; }
.under span { font: 22px/25px "Liberation Sans", sans-serif; text-shadow: 0 0 1px #999; }
.brand { position: absolute; right: 0; bottom: 0; display: flex; align-items: center; gap: 6px; width: 200px; height: 95px; padding: 0 0 7px 11px; background: #1f2e55; color: #d4d8dd; }
.brand div { display: flex; flex-direction: column; padding-top: 10px; }
.brand strong { font: 500 29px/33px Roboto, "Noto Sans CJK SC", sans-serif; white-space: nowrap; }
.brand span { font: 26px/24px Roboto, sans-serif; }
</style>
